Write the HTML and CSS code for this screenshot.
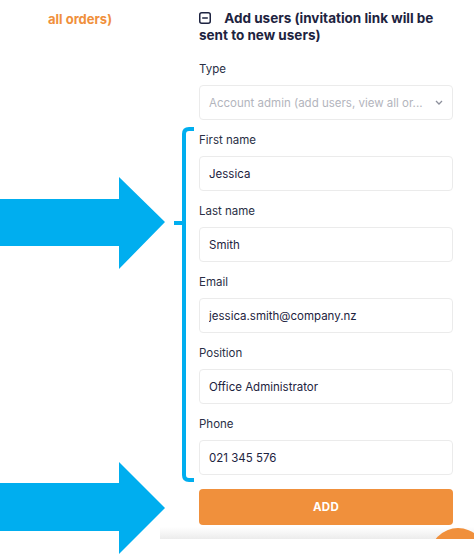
FILE: index.html
```html
<!DOCTYPE html>
<html lang="en">
  <head>
    <meta charset="UTF-8" />
    <meta name="viewport" content="width=device-width, initial-scale=1.0" />
    <title>Add users</title>
    <link rel="stylesheet" href="styles.css">
  </head>
  <body>
    <div class="page">
      <div class="side">
        <a class="side-link" href="#">all orders)</a>
      </div>

      <form class="add-users" onsubmit="return false">
        <h2 class="section-title">
          <svg class="collapse-icon" width="12" height="12" viewBox="0 0 12 12">
            <rect x="0.75" y="0.75" width="10.5" height="10.5" rx="2" fill="none" stroke="#1d2340" stroke-width="1.5" />
            <line x1="3.2" y1="6" x2="8.8" y2="6" stroke="#1d2340" stroke-width="1.5" />
          </svg>
          Add users (invitation link will be sent to new users)
        </h2>

        <div class="field">
          <label>Type</label>
          <div class="select">
            <span>Account admin (add users, view all or...</span>
            <svg width="8" height="5" viewBox="0 0 8 5">
              <path d="M1 1l3 3 3-3" fill="none" stroke="#8d909c" stroke-width="1.3" />
            </svg>
          </div>
        </div>

        <div class="field">
          <label>First name</label>
          <input type="text" value="Jessica" />
        </div>
        <div class="field">
          <label>Last name</label>
          <input type="text" value="Smith" />
        </div>
        <div class="field">
          <label>Email</label>
          <input type="text" value="jessica.smith@company.nz" />
        </div>
        <div class="field">
          <label>Position</label>
          <input type="text" value="Office Administrator" />
        </div>
        <div class="field">
          <label>Phone</label>
          <input type="text" value="021 345 576" />
        </div>

        <button class="add-btn">ADD</button>
      </form>
    </div>

    <div class="footer-shade">
      <div class="chat-fab"></div>
    </div>

    <!-- annotation arrows and bracket -->
    <svg class="annotations" width="474" height="555" viewBox="0 0 474 555">
      <polygon points="0,199 119,199 119,177 165,222 119,269 119,246 0,246" fill="#00aeef" />
      <polygon points="0,483 119,483 119,462 165,508 119,554 119,531 0,531" fill="#00aeef" />
      <path d="M194 129 H189 Q184 129 184 134 V475 Q184 480 189 480 H194" fill="none" stroke="#00aeef" stroke-width="4" />
      <path d="M174 223 H184" fill="none" stroke="#00aeef" stroke-width="4" />
    </svg>
  </body>
</html>
```

FILE: styles.css
```css
body {
  margin: 0;
  font-family: Inter, "Open Sans", sans-serif;
  color: #1d2340;
  background: #fff;
  width: 474px;
  height: 555px;
  overflow: hidden;
  position: relative;
}
.page {
  display: grid;
  grid-template-columns: 199px 254px;
}
.side {
  padding: 8px 0 0 48px;
}
.side-link {
  color: #f0903c;
  font-weight: 700;
  font-size: 13px;
  text-decoration: none;
}
.add-users {
  padding-top: 10px;
}
.section-title {
  margin: 0 0 17px;
  font-size: 13.5px;
  line-height: 17px;
  font-weight: 700;
}
.collapse-icon {
  vertical-align: -1px;
  margin-right: 10px;
}
.field {
  margin-bottom: 12px;
}
.field label {
  display: block;
  font-size: 11.5px;
  line-height: 16px;
  margin-bottom: 8px;
  color: #2a2f45;
}
.field input,
.select {
  box-sizing: border-box;
  width: 100%;
  height: 35px;
  border: 1px solid #ebebeb;
  border-radius: 4px;
  padding: 0 9px;
  font-family: inherit;
  font-size: 11.5px;
  color: #1d2340;
  background: #fff;
}
.select {
  display: flex;
  align-items: center;
  justify-content: space-between;
  color: #b3b5bd;
}
.add-btn {
  display: block;
  width: 100%;
  height: 36px;
  margin-top: 14px;
  border: none;
  border-radius: 4px;
  background-color: #f0903c;
  color: #fff;
  font-family: inherit;
  font-weight: 700;
  font-size: 11.5px;
  letter-spacing: 0.3px;
  cursor: pointer;
}
.footer-shade {
  position: absolute;
  left: 160px;
  right: 0;
  top: 527px;
  height: 12px;
  background: linear-gradient(to bottom, #fff, #ececec);
  overflow: hidden;
}
.chat-fab {
  position: absolute;
  left: 270px;
  top: 1px;
  width: 56px;
  height: 56px;
  border-radius: 50%;
  background: #f0903c;
}
.annotations {
  position: absolute;
  top: 0;
  left: 0;
  pointer-events: none;
}
```
